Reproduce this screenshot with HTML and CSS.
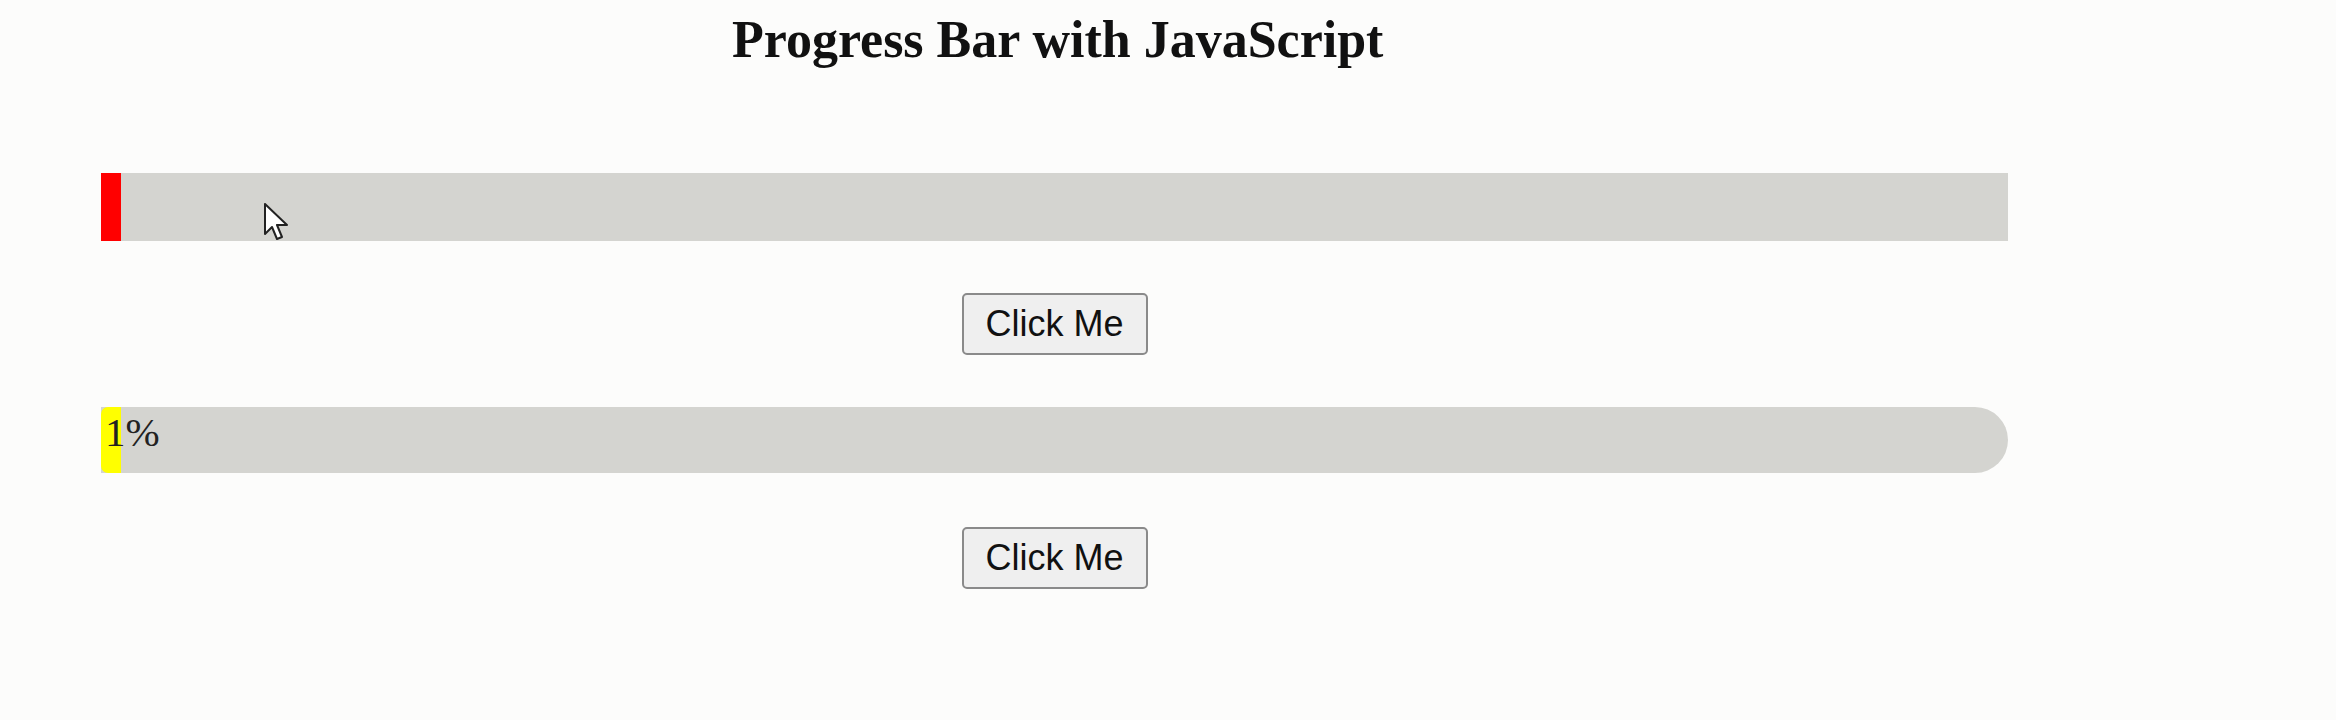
FILE: index.html
```html
<!DOCTYPE html>
<html>
<head>
<meta charset="utf-8">
<link rel="stylesheet" href="styles.css">
</head>
<body>
<h1 class="title">Progress Bar with JavaScript</h1>
<main class="content">
  <div class="bar">
    <div class="fill fill-red" style="width:20px"></div>
  </div>
  <div class="actions"><button class="btn">Click Me</button></div>
  <div class="bar bar-round">
    <div class="fill fill-yellow" style="width:20px"><span class="pct">1%</span></div>
  </div>
  <div class="actions actions-last"><button class="btn">Click Me</button></div>
</main>
<svg class="cursor" width="26" height="38" viewBox="0 0 13 19">
  <path d="M0.5 0.5 L0.5 15.5 L4 12 L6.5 18 L9 17 L6.5 11 L11.5 11 Z" fill="#fff" stroke="#222" stroke-width="1" stroke-linejoin="round"/>
</svg>
</body>
</html>
```
FILE: styles.css
```css
html, body {
  margin: 0;
  padding: 0;
  background: #fcfcfb;
}
body {
  position: relative;
  width: 2336px;
  height: 720px;
  overflow: hidden;
  font-family: "Liberation Serif", "Times New Roman", serif;
  color: #111;
}
.title {
  margin: 0;
  padding: 12px 0 0 732px;
  font-size: 52px;
  font-weight: bold;
  line-height: 56px;
  height: 160px;
  box-sizing: border-box;
}
.content {
  margin-left: 101px;
  width: 1907px;
  padding-top: 13px;
}
.bar {
  height: 68px;
  background: #d4d4d0;
  display: flex;
}
.bar-round {
  height: 66px;
  border-radius: 0 33px 33px 0;
}
.fill {
  height: 100%;
  position: relative;
}
.fill-red { background: #ff0000; }
.fill-yellow {
  background: #ffff00;
  border-radius: 7px 0 0 7px;
}
.pct {
  position: absolute;
  left: 4px;
  top: 0;
  font-size: 41px;
  line-height: 50px;
  color: #222;
  white-space: nowrap;
}
.actions {
  display: flex;
  justify-content: center;
  padding: 52px 0 52px;
}
.actions-last { padding-top: 54px; padding-bottom: 0; }
.btn {
  width: 186px;
  height: 62px;
  font-family: "Liberation Sans", Arial, sans-serif;
  font-size: 36px;
  color: #111;
  background: #efefef;
  border: 2px solid #8a8a8a;
  border-radius: 5px;
  padding: 0;
}
.cursor {
  position: absolute;
  left: 264px;
  top: 203px;
}
```
